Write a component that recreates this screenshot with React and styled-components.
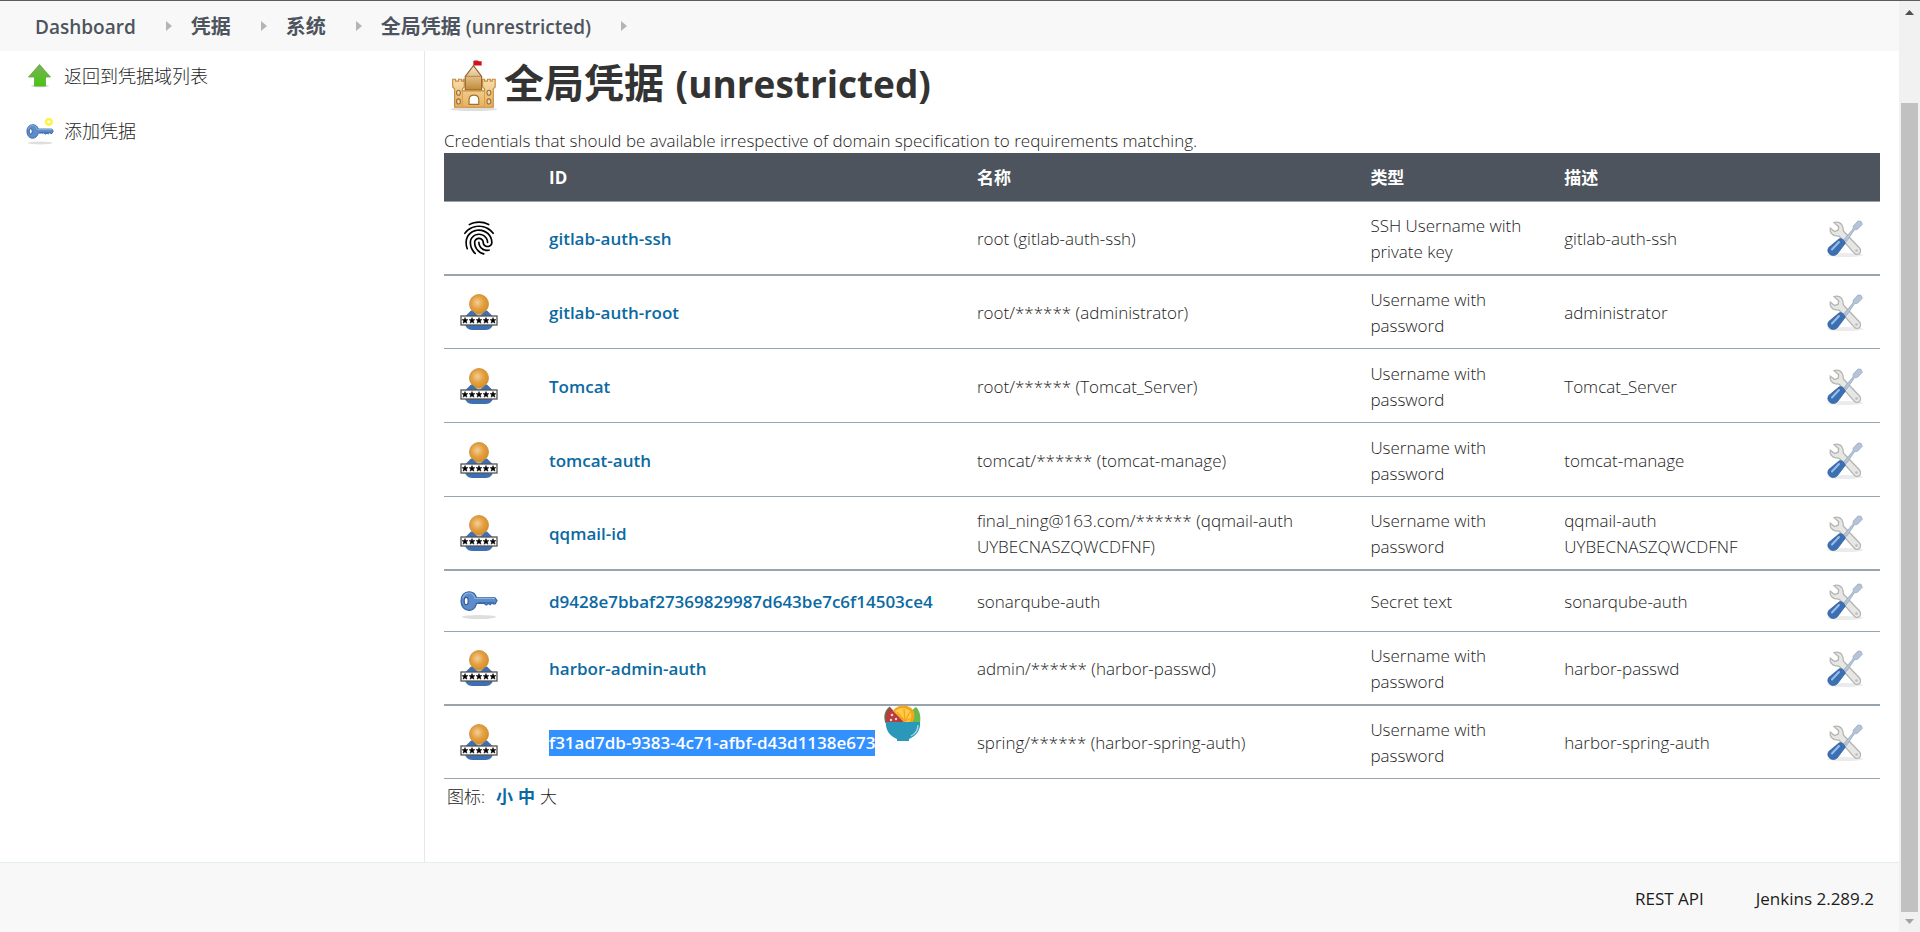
import React from "react";
import styled, { createGlobalStyle, css } from "styled-components";
import { MdFingerprint } from "react-icons/md";

const GlobalStyle = createGlobalStyle`
  *, *::before, *::after { box-sizing: border-box; }
  body {
    margin: 0;
    background: #fff;
    color: #1c1c1c;
    font-family: "Open Sans", "Noto Sans CJK SC", sans-serif;
    font-size: 17px;
    line-height: 26px;
  }
  a { color: inherit; text-decoration: none; }
`;

const Window = styled.div`
  display: grid;
  grid-template-columns: minmax(0, 1fr) 21px;
  height: 100vh;
  border-top: 1px solid #5d5a64;
`;

const Page = styled.div`
  display: flex;
  flex-direction: column;
  min-height: 0;
  overflow: hidden;
`;

const Breadcrumbs = styled.nav`
  display: flex;
  align-items: center;
  flex: 0 0 50px;
  padding: 2px 35px 0;
  background: #f8f8f8;
  color: #4d545d;
  font-size: 19px;
  font-weight: 600;
`;

const Crumb = styled.a`
  display: flex;
  align-items: center;
  white-space: pre;
`;

const CrumbArrow = styled.svg`
  width: 6px;
  height: 10px;
  margin: 0 19px 2px 30px;
  fill: #b4b4b4;
`;

const Cjk = styled.span`
  font-size: 20px;
  font-weight: 700;
`;

const Body = styled.div`
  display: flex;
  flex: 1 1 auto;
`;

const Side = styled.aside`
  flex: 0 0 425px;
  border-right: 1px solid #e8e8ec;
  padding: 9px 24px;
`;

const Task = styled.a`
  display: flex;
  align-items: center;
  gap: 10px;
  height: 32px;
  margin-bottom: 23px;
  font-size: 18px;
  font-weight: 300;
`;

const TaskIcon = styled.svg`
  width: 30px;
  height: 30px;
`;

const Main = styled.main`
  flex: 1 1 auto;
  min-width: 0;
  padding: 0 19px;
`;

const Title = styled.h1`
  display: flex;
  align-items: center;
  gap: 4px;
  height: 64px;
  margin: 0 0 13px;
  color: #333;
  font-size: 37px;
  font-weight: 700;
  line-height: 64px;
  white-space: pre;
`;

const TitleCjk = styled.span`
  margin-right: 2px;
  font-size: 40px;
`;

const CastleIcon = styled.svg`
  width: 56px;
  height: 56px;
  margin-top: 6px;
`;

const Intro = styled.p`
  margin: 0 0 -1px;
  font-weight: 300;
`;

const Table = styled.table`
  width: 100%;
  table-layout: fixed;
  border-collapse: separate;
  border-spacing: 0;
`;

const HeadCell = styled.th`
  width: ${(p) => p.$width};
  height: 49px;
  padding: 2px 9px 0;
  background: #4d545d;
  border-bottom: 1px solid #98a5ae;
  color: #fff;
  font-weight: 700;
  text-align: left;
`;

const Row = styled.tr`
  height: ${(p) => (p.$compact ? 61 : 74)}px;
  &:nth-child(6n + 2) { height: 73px; }
  td { border-bottom: ${(p) => (p.$thick ? 2 : 1)}px solid #98a5ae; }
`;

const Cell = styled.td`
  padding: 2px 20px 0 9px;
  font-weight: 300;
  vertical-align: middle;
`;

const IconCell = styled.td`
  padding: 0 15px;
  vertical-align: middle;
  svg { display: block; width: 40px; height: 40px; }
`;

const ToolCell = styled(IconCell)`
  a { display: block; }
`;

const IdCell = styled(Cell)`
  position: relative;
  padding-right: 0;
`;

const IdLink = styled.a`
  color: #0b6aa2;
  font-weight: 600;
  ${(p) => p.$selected && css`
    display: inline-block;
    background: #3390ff;
    color: #fff;
  `}
`;

const Bowl = styled.svg`
  position: absolute;
  top: -2px;
  right: 46px;
  width: 38px;
  height: 38px;
`;

const Sizes = styled.div`
  display: flex;
  gap: 5px;
  padding: 5px 3px;
  font-weight: 300;
  a { color: #0b6aa2; font-weight: 700; }
`;

const SizesLabel = styled.span`
  margin-right: 6px;
`;

const Footer = styled.footer`
  display: flex;
  align-items: center;
  justify-content: flex-end;
  gap: 52px;
  flex: 0 0 70px;
  padding: 2px 25px 0;
  background: #f8f8f8;
  border-top: 1px solid #e4eeee;
  font-weight: 500;
`;

const ScrollTrack = styled.div`
  display: flex;
  flex-direction: column;
  align-items: center;
  background: #f1f1f1;
`;

const ScrollArrow = styled.svg`
  width: 21px;
  height: 20px;
  flex: none;
  fill: ${(p) => p.$color};
`;

const ScrollThumb = styled.div`
  flex: 1;
  width: 17px;
  margin-top: 82px;
  background: #c1c1c1;
`;

function Separator() {
  return (
    <CrumbArrow viewBox="0 0 6 10" aria-hidden="true">
      <path d="M0 0 L6 5 L0 10 Z" />
    </CrumbArrow>
  );
}

function KeyShape() {
  return (
    <>
      <ellipse cx="20" cy="36" rx="17" ry="2" fill="#000" opacity=".13" />
      <path
        d="M10 10.8c4 0 6.6 2.5 7.5 6H36l2 2.7-1.8 3.4h-2l-1-1.2-2 2-1.8-1.2-2 1.5-2.3-1.6H17.6c-1 4-3.8 7-7.6 7-4.9 0-8-4-8-9.3s3.1-9.3 8-9.3z"
        fill="#5c8dca"
        stroke="#3866a4"
        strokeWidth="1.2"
      />
      <path d="M4 17c1-3.5 3.5-5 6-5s5 2 6 5.500h20" fill="none" stroke="#8fb3e0" strokeWidth="1.2" />
      <ellipse cx="7.200" cy="20" rx="2" ry="3.700" fill="#fff" stroke="#315a94" strokeWidth="1.2" />
      <path d="M19 21.500h16" stroke="#3c6cab" strokeWidth="1" />
    </>
  );
}

function KeyIcon() {
  return <svg viewBox="0 0 40 40" aria-hidden="true"><KeyShape /></svg>;
}

const STAR = "M0-3 .8-.9 2.900-.9 1.300 .5 2 2.700 0 1.400-2 2.700-1.300 .5-2.900-.9-.8-.9Z";

function UserIcon() {
  return (
    <svg viewBox="0 0 40 40" aria-hidden="true">
      <defs>
        <radialGradient id="head" cx=".42" cy=".42" r=".6">
          <stop offset="0" stopColor="#f3cf96" />
          <stop offset=".55" stopColor="#e3a043" />
          <stop offset="1" stopColor="#d98f22" />
        </radialGradient>
      </defs>
      <path d="M12 18.500 6.500 24v10c2 3 4 4 7 4h13c3 0 5-1 7-4V24L28 18.500Z" fill="#3e6fb3" />
      <path d="M15 20h10l-5 5Z" fill="#c2b69d" />
      <circle cx="20" cy="12" r="9.500" fill="url(#head)" stroke="#c98a2b" strokeWidth=".8" />
      <rect x="2" y="24" width="36" height="9" fill="#fff" stroke="#555" strokeWidth="1.300" />
      {[6, 13, 20, 27, 34].map((x) => (
        <path key={x} d={STAR} transform={`translate(${x} 28.500)`} fill="#000" stroke="#000" strokeWidth=".5" />
      ))}
    </svg>
  );
}

function ToolsIcon() {
  return (
    <svg viewBox="0 0 40 40" aria-hidden="true">
      <ellipse cx="20" cy="37" rx="18" ry="2" fill="#000" opacity=".08" />
      <path
        d="M9 4.500c4-1.500 8.500 1 9 5 .2 1.500 0 3 .8 4L34.500 30c1.500 2 1.300 4.500-.3 5.700s-4 .8-5.200-.8L14.500 18.500c-1-.8-2.500-.5-4-.7-3.800-.6-6-4-5.200-7.600l4.200 3.300 3.700-1.300.5-3.500Z"
        fill="#e6e6e4"
        stroke="#b4b4b0"
        strokeWidth="1.300"
      />
      <circle cx="31.500" cy="32.500" r="1.300" fill="#bbb" />
      <path d="M19 21.500 28 11l.3-3 4.700-5 3 .3 1.300 3-4.800 5-3 .4L21.500 23.500Z" fill="#b7c4d6" stroke="#98a9c0" strokeWidth=".8" />
      <path d="M14 21c2-1.500 7 2 6 4.600l-7.500 10c-2 2.300-5.500 2.300-7.700.6s-2.500-4.600-1-6.700Z" fill="#3c70b5" stroke="#2d5c9d" strokeWidth=".8" />
      <path d="M14 24 7 31.500" stroke="#9dbce4" strokeWidth="2" strokeLinecap="round" />
    </svg>
  );
}

function Castle() {
  return (
    <CastleIcon viewBox="-1 -1 58 58" aria-hidden="true">
      <defs>
        <linearGradient id="tower" x1="0" y1="0" x2="0" y2="1">
          <stop offset="0" stopColor="#f5e7cf" />
          <stop offset="1" stopColor="#c48a35" />
        </linearGradient>
        <linearGradient id="wall" x1="0" y1="0" x2="0" y2="1">
          <stop offset="0" stopColor="#f8dfae" />
          <stop offset="1" stopColor="#e7b05b" />
        </linearGradient>
      </defs>
      <ellipse cx="30" cy="52" rx="24" ry="2" fill="#000" opacity=".13" />
      <path d="M29.500 8V2" stroke="#888" />
      <path d="M30 1.500h4l1 .8h3v4.500h-8Z" fill="#d3101d" />
      <path d="m29.500 7 8.500 11v14H21V18Z" fill="url(#tower)" stroke="#946225" strokeWidth="1.2" />
      <path d="M21.500 18h16" stroke="#b88646" />
      <path
        d="M8 21h3v2h3v-2h3v2h2v-2h1v8l-2 2v2h23v-2l-2-2v-8h2v2h3v-2h3v2h2v-2h3v8l-2 2v19H10V31l-2-2Z"
        fill="url(#wall)"
        stroke="#c48a3c"
        strokeWidth="1.2"
      />
      <path d="M18 33v16M41 33v16" stroke="#d69b4b" />
      {[[14, 35], [45.5, 35], [14, 44], [45.5, 44]].map(([cx, cy]) => (
        <ellipse key={`${cx}-${cy}`} cx={cx} cy={cy} rx="2" ry="2.600" fill="#e4d9c3" stroke="#a3702f" strokeWidth="1.2" />
      ))}
      <path d="M25 47v-5c0-6 10-6 10 0v5Z" fill="#fff" stroke="#a3702f" strokeWidth="1.2" />
    </CastleIcon>
  );
}

function FruitBowl() {
  return (
    <Bowl viewBox="0 0 38 38" aria-hidden="true">
      <path d="M6 3C1 7 0 13 2 19h19Z" fill="#b63c42" />
      <path d="M6 3C1 7 0 13 2 19" fill="none" stroke="#557e47" strokeWidth="1.300" />
      <path d="M32 3c4 4 5 10 4 16H24c0-6 3-13 8-16Z" fill="#69b84d" />
      <path d="M9 7C14-1 27 0 30 8c1 4 0 8-2 11h-7Z" fill="#f3a420" />
      <path d="M11 8c4-6 13-5 16 1 1 3 0 7-2 9h-3Z" fill="#ffcb45" />
      <path d="m21 17-8-9m8 9-1-12m1 12 5-9m-5 9 7-3" stroke="#f3a420" strokeWidth="1.2" />
      <g fill="#ffd5b5"><circle cx="8" cy="11" r="1.300" /><circle cx="7" cy="16" r="1.200" /><circle cx="12" cy="15" r="1.200" /></g>
      <path d="M2 18h34c1 8-4 14-11 17v2H13v-2C6 32 1 26 2 18Z" fill="#2c98b9" />
      <path d="M34 21c0 5-3 9-7 11" fill="none" stroke="#a5dce9" strokeWidth="1.300" />
    </Bowl>
  );
}

const ICONS = { user: UserIcon, key: KeyIcon, finger: MdFingerprint };

const CREDENTIALS = [
  { icon: "finger", id: "gitlab-auth-ssh", name: "root (gitlab-auth-ssh)", type: "SSH Username with private key", desc: "gitlab-auth-ssh", thick: true },
  { icon: "user", id: "gitlab-auth-root", name: "root/****** (administrator)", type: "Username with password", desc: "administrator" },
  { icon: "user", id: "Tomcat", name: "root/****** (Tomcat_Server)", type: "Username with password", desc: "Tomcat_Server" },
  { icon: "user", id: "tomcat-auth", name: "tomcat/****** (tomcat-manage)", type: "Username with password", desc: "tomcat-manage" },
  { icon: "user", id: "qqmail-id", name: "final_ning@163.com/****** (qqmail-auth UYBECNASZQWCDFNF)", type: "Username with password", desc: "qqmail-auth UYBECNASZQWCDFNF", thick: true },
  { icon: "key", id: "d9428e7bbaf27369829987d643be7c6f14503ce4", name: "sonarqube-auth", type: "Secret text", desc: "sonarqube-auth", compact: true },
  { icon: "user", id: "harbor-admin-auth", name: "admin/****** (harbor-passwd)", type: "Username with password", desc: "harbor-passwd", thick: true },
  { icon: "user", id: "f31ad7db-9383-4c71-afbf-d43d1138e673", name: "spring/****** (harbor-spring-auth)", type: "Username with password", desc: "harbor-spring-auth", selected: true },
];

function CredentialRow({ item }) {
  const Icon = ICONS[item.icon];
  return (
    <Row $thick={item.thick} $compact={item.compact}>
      <IconCell><Icon color="#000" /></IconCell>
      <IdCell>
        <IdLink href="#" $selected={item.selected}>{item.id}</IdLink>
        {item.selected && <FruitBowl />}
      </IdCell>
      <Cell>{item.name}</Cell>
      <Cell>{item.type}</Cell>
      <Cell>{item.desc}</Cell>
      <ToolCell><a href="#" aria-label={`更新 ${item.id}`}><ToolsIcon /></a></ToolCell>
    </Row>
  );
}

export default function App() {
  return (
    <>
      <GlobalStyle />
      <Window>
        <Page>
          <Breadcrumbs>
            <Crumb href="#">Dashboard</Crumb>
            <Separator />
            <Crumb href="#"><Cjk>凭据</Cjk></Crumb>
            <Separator />
            <Crumb href="#"><Cjk>系统</Cjk></Crumb>
            <Separator />
            <Crumb href="#"><Cjk>全局凭据</Cjk> (unrestricted)</Crumb>
            <Separator />
          </Breadcrumbs>
          <Body>
            <Side>
              <Task href="#">
                <TaskIcon viewBox="0 0 30 30" aria-hidden="true">
                  <defs>
                    <linearGradient id="up" x1="0" y1="0" x2="0" y2="1">
                      <stop offset="0" stopColor="#7dae5e" />
                      <stop offset="1" stopColor="#45c80b" />
                    </linearGradient>
                  </defs>
                  <ellipse cx="16" cy="25" rx="9" ry="1.500" fill="#000" opacity=".15" />
                  <path d="m15.500 3.500 11 12.500h-5v9h-11v-9h-6Z" fill="url(#up)" stroke="#5fa63a" strokeWidth=".8" />
                </TaskIcon>
                返回到凭据域列表
              </Task>
              <Task href="#">
                <TaskIcon viewBox="-2 -1 41 41" aria-hidden="true">
                  <KeyShape />
                  <circle cx="32" cy="7" r="4" fill="#fffde0" stroke="#fff24a" strokeWidth="3.500" />
                </TaskIcon>
                添加凭据
              </Task>
            </Side>
            <Main>
              <Title>
                <Castle />
                <span><TitleCjk>全局凭据</TitleCjk> (unrestricted)</span>
              </Title>
              <Intro>Credentials that should be available irrespective of domain specification to requirements matching.</Intro>
              <Table>
                <thead>
                  <tr>
                    <HeadCell $width="96px" aria-label="图标" />
                    <HeadCell $width="29.8%">ID</HeadCell>
                    <HeadCell $width="27.4%">名称</HeadCell>
                    <HeadCell $width="13.5%">类型</HeadCell>
                    <HeadCell>描述</HeadCell>
                    <HeadCell $width="70px" aria-label="操作" />
                  </tr>
                </thead>
                <tbody>
                  {CREDENTIALS.map((item) => <CredentialRow key={item.id} item={item} />)}
                </tbody>
              </Table>
              <Sizes>
                <SizesLabel>图标:</SizesLabel>
                <a href="#">小</a>
                <a href="#">中</a>
                <span>大</span>
              </Sizes>
            </Main>
          </Body>
          <Footer>
            <a href="#">REST API</a>
            <a href="#">Jenkins 2.289.2</a>
          </Footer>
        </Page>
        <ScrollTrack aria-hidden="true">
          <ScrollArrow viewBox="0 0 21 20" $color="#505050"><path d="M6 14h9l-4.500-5Z" /></ScrollArrow>
          <ScrollThumb />
          <ScrollArrow viewBox="0 0 21 20" $color="#a3a3a3"><path d="M6 7h9l-4.500 5Z" /></ScrollArrow>
        </ScrollTrack>
      </Window>
    </>
  );
}
